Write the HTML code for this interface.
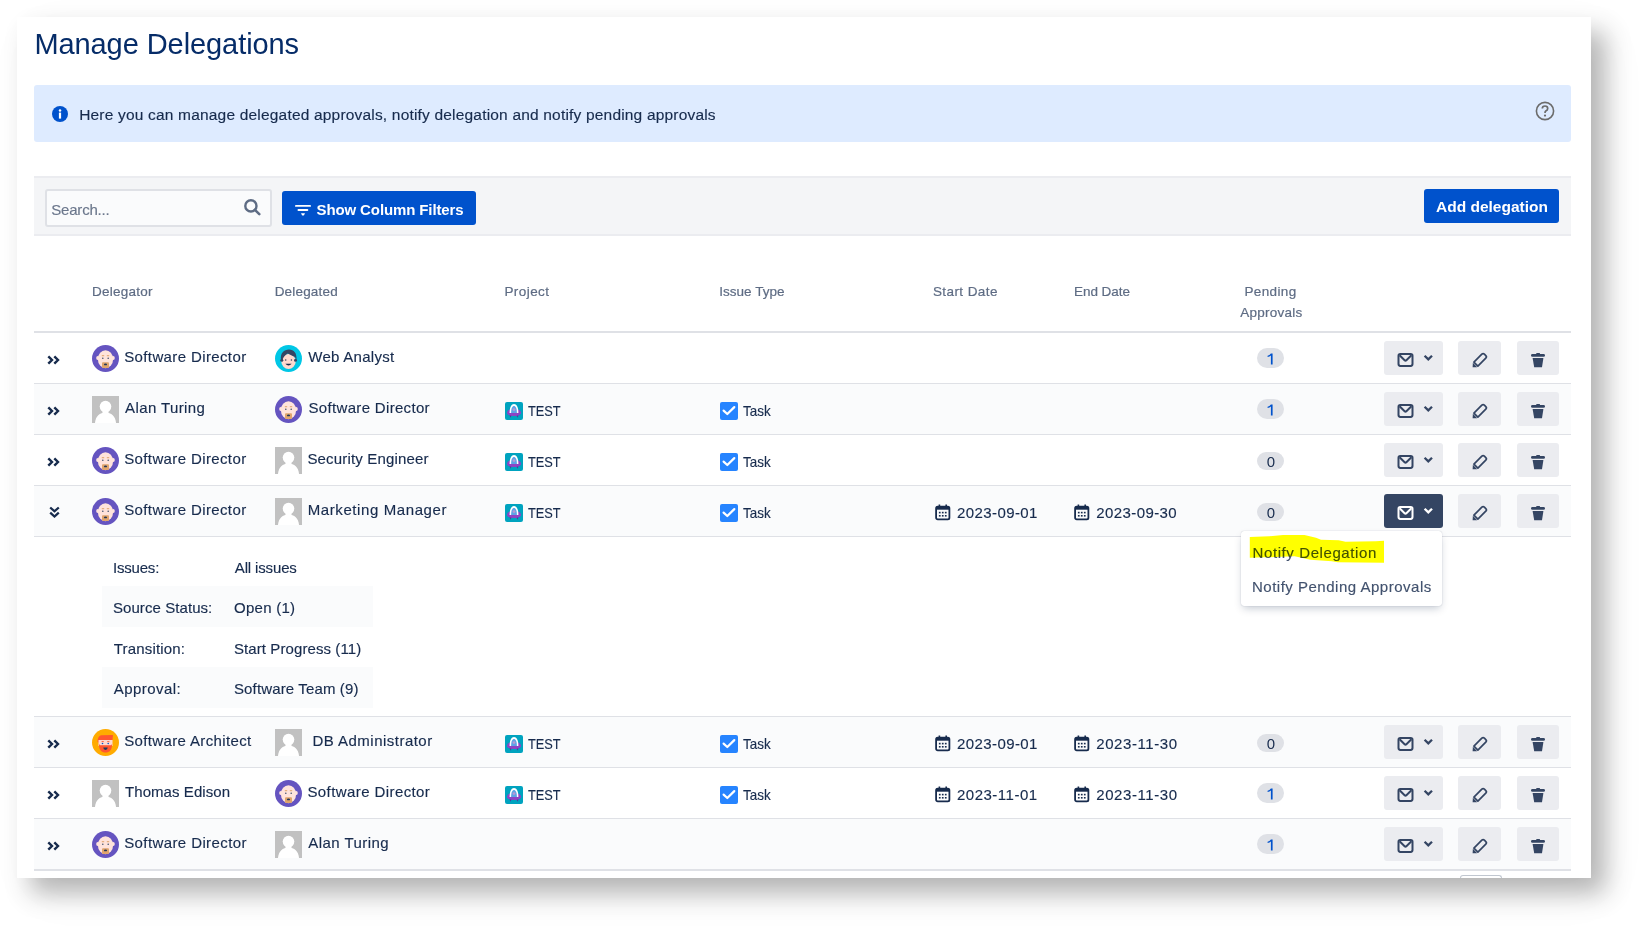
<!DOCTYPE html><html><head><meta charset="utf-8"><style>
html,body{margin:0;padding:0;background:#fff;}
body{width:1639px;height:926px;position:relative;overflow:hidden;font-family:"Liberation Sans", sans-serif;}
.t{position:absolute;white-space:nowrap;font-family:"Liberation Sans", sans-serif;}
</style></head><body>
<div style="position:absolute;left:17px;top:17px;width:1574px;height:861px;background:#fff;box-shadow:14px 15px 24px rgba(0,0,0,0.28),14px 15px 50px rgba(0,0,0,0.04);"></div>
<div class="t" id="t0" style="left:34.38px;top:30.35px;font-size:29px;line-height:29px;color:#062c68;font-weight:400;letter-spacing:-0.075px;">Manage Delegations</div>
<div style="position:absolute;left:34px;top:85px;width:1537px;height:57px;background:#deebff;border-radius:3px"></div>
<svg style="position:absolute;left:52px;top:106px;" width="16" height="16" viewBox="0 0 16 16"><circle cx="8" cy="8" r="8" fill="#0052cc"/><rect x="6.9" y="6.6" width="2.2" height="6" fill="#fff"/><circle cx="8" cy="4.4" r="1.25" fill="#fff"/></svg>
<div class="t" id="t1" style="left:79.20px;top:106.83px;font-size:15.5px;line-height:15.5px;color:#172b4d;font-weight:400;letter-spacing:0.186px;-webkit-text-stroke:0.15px #172b4d;">Here you can manage delegated approvals, notify delegation and notify pending approvals</div>
<svg style="position:absolute;left:1535px;top:101px;" width="20" height="20" viewBox="0 0 20 20"><circle cx="10" cy="10" r="8.6" fill="none" stroke="#6b6b6b" stroke-width="1.6"/><path d="M7.3 7.6 Q7.3 5 10 5 Q12.7 5 12.7 7.4 Q12.7 9 10.8 10 Q10 10.5 10 12" fill="none" stroke="#6b6b6b" stroke-width="1.7"/><circle cx="10" cy="14.6" r="1.1" fill="#6b6b6b"/></svg>
<div style="position:absolute;left:34px;top:176px;width:1537px;height:60px;background:#f4f5f7;border-top:2px solid #ebecf0;border-bottom:2px solid #ebecf0;box-sizing:border-box"></div>
<div style="position:absolute;left:45px;top:189px;width:227px;height:38px;background:#fafbfc;border:2px solid #dfe1e6;border-radius:3px;box-sizing:border-box"></div>
<div class="t" id="t2" style="left:51.18px;top:202.25px;font-size:15px;line-height:15px;color:#6b778c;font-weight:400;letter-spacing:-0.180px;-webkit-text-stroke:0.15px #6b778c;">Search...</div>
<svg style="position:absolute;left:242px;top:197px;" width="20" height="20" viewBox="0 0 20 20"><circle cx="8.9" cy="8.9" r="5.6" fill="none" stroke="#5e6c84" stroke-width="2.4"/><path d="M12.9 12.9 L17.3 17.1" stroke="#5e6c84" stroke-width="2.6" stroke-linecap="round"/></svg>
<div style="position:absolute;left:282px;top:191px;width:194px;height:34px;background:#0052cc;border-radius:3px"></div>
<svg style="position:absolute;left:294px;top:204px;" width="18" height="14" viewBox="0 0 18 14"><rect x="1" y="1" width="16" height="1.8" rx="0.9" fill="#fff"/><rect x="3.5" y="5" width="10.8" height="1.9" rx="0.9" fill="#fff"/><path d="M7 9.2 L11 9.2 L10 11.2 Q9 11.9 8 11.2 Z" fill="#fff"/></svg>
<div class="t" id="t3" style="left:316.54px;top:202.45px;font-size:15px;line-height:15px;color:#fff;font-weight:700;letter-spacing:-0.116px;">Show Column Filters</div>
<div style="position:absolute;left:1424px;top:189px;width:135px;height:34px;background:#0052cc;border-radius:3px"></div>
<div class="t" id="t4" style="left:1436.00px;top:199.42px;font-size:15.5px;line-height:15.5px;color:#fff;font-weight:700;letter-spacing:0.000px;">Add delegation</div>
<div class="t" id="t5" style="left:91.96px;top:284.52px;font-size:13.5px;line-height:13.5px;color:#5e6c84;font-weight:400;letter-spacing:0.260px;-webkit-text-stroke:0.2px #5e6c84;">Delegator</div>
<div class="t" id="t6" style="left:274.70px;top:284.52px;font-size:13.5px;line-height:13.5px;color:#5e6c84;font-weight:400;letter-spacing:0.180px;-webkit-text-stroke:0.2px #5e6c84;">Delegated</div>
<div class="t" id="t7" style="left:504.44px;top:284.52px;font-size:13.5px;line-height:13.5px;color:#5e6c84;font-weight:400;letter-spacing:0.427px;-webkit-text-stroke:0.2px #5e6c84;">Project</div>
<div class="t" id="t8" style="left:719.18px;top:284.52px;font-size:13.5px;line-height:13.5px;color:#5e6c84;font-weight:400;letter-spacing:0.036px;-webkit-text-stroke:0.2px #5e6c84;">Issue Type</div>
<div class="t" id="t9" style="left:932.94px;top:284.52px;font-size:13.5px;line-height:13.5px;color:#5e6c84;font-weight:400;letter-spacing:0.409px;-webkit-text-stroke:0.2px #5e6c84;">Start Date</div>
<div class="t" id="t10" style="left:1073.94px;top:284.52px;font-size:13.5px;line-height:13.5px;color:#5e6c84;font-weight:400;letter-spacing:-0.023px;-webkit-text-stroke:0.2px #5e6c84;">End Date</div>
<div class="t" id="t11" style="left:1244.42px;top:284.52px;font-size:13.5px;line-height:13.5px;color:#5e6c84;font-weight:400;letter-spacing:0.373px;-webkit-text-stroke:0.2px #5e6c84;">Pending</div>
<div class="t" id="t12" style="left:1240.24px;top:306.12px;font-size:13.5px;line-height:13.5px;color:#5e6c84;font-weight:400;letter-spacing:0.260px;-webkit-text-stroke:0.2px #5e6c84;">Approvals</div>
<div style="position:absolute;left:34px;top:331px;width:1537px;height:2px;background:#dfe1e6"></div>
<div style="position:absolute;left:34px;top:333px;width:1537px;height:50px;background:#fff"></div>
<div style="position:absolute;left:34px;top:383px;width:1537px;height:1px;background:#dfe1e6"></div>
<svg style="position:absolute;left:47.4px;top:354.6px;" width="13" height="10" viewBox="0 0 13 10"><path d="M1.3 1.3 L5 5 L1.3 8.7 M7.3 1.3 L11 5 L7.3 8.7" fill="none" stroke="#172b4d" stroke-width="2.4" stroke-linecap="butt" stroke-linejoin="miter"/></svg>
<svg style="position:absolute;left:92px;top:345px;" width="27" height="27" viewBox="0 0 27 27"><circle cx="13.5" cy="13.5" r="13.5" fill="#6554c0"/>
<ellipse cx="13.5" cy="14.2" rx="7.6" ry="9" fill="#ffe3db"/>
<ellipse cx="5.8" cy="13" rx="1.6" ry="2" fill="#ffe3db"/><ellipse cx="21.2" cy="13" rx="1.6" ry="2" fill="#ffe3db"/>
<rect x="10" y="17.3" width="7" height="5.6" rx="1" fill="#e0a46c"/>
<ellipse cx="13.5" cy="19.4" rx="1.6" ry="0.9" fill="#253858"/>
<rect x="9.8" y="10.2" width="2.4" height="1" fill="#e0a46c"/><rect x="14.8" y="10.2" width="2.4" height="1" fill="#e0a46c"/>
<circle cx="10.8" cy="13.2" r="0.8" fill="#42526e"/><circle cx="16.2" cy="13.2" r="0.8" fill="#42526e"/></svg>
<div class="t" id="t13" style="left:124.20px;top:349.45px;font-size:15px;line-height:15px;color:#172b4d;font-weight:400;letter-spacing:0.380px;-webkit-text-stroke:0.15px #172b4d;">Software Director</div>
<svg style="position:absolute;left:275px;top:345px;" width="27" height="27" viewBox="0 0 27 27"><circle cx="13.5" cy="13.5" r="13.5" fill="#00c7e6"/>
<ellipse cx="13.5" cy="16.5" rx="7.2" ry="7.4" fill="#ffd9cf"/>
<path d="M6 15 C5 8 9 4.5 14 4.5 C19 4.5 22 8 21.5 15 L20 12 C17 11 14 9 12.5 8.5 C10.5 10 8 12 7.5 15 Z" fill="#344563"/>
<circle cx="6.8" cy="15.2" r="1.5" fill="#344563"/><circle cx="20.5" cy="15.2" r="1.5" fill="#344563"/>
<circle cx="10.7" cy="15" r="0.8" fill="#344563"/><circle cx="16.4" cy="15" r="0.8" fill="#344563"/>
<path d="M10.3 18.8 Q13.5 22.2 16.7 18.8 Z" fill="#172b4d"/></svg>
<div class="t" id="t14" style="left:308.24px;top:349.45px;font-size:15px;line-height:15px;color:#172b4d;font-weight:400;letter-spacing:0.288px;-webkit-text-stroke:0.15px #172b4d;">Web Analyst</div>
<div style="position:absolute;left:1257.0px;top:348px;width:27px;height:20px;border-radius:10px;background:#dfe1e6;"></div>
<svg style="position:absolute;left:1264.5px;top:352.8px;" width="10" height="13" viewBox="0 0 10 13"><path d="M5.9 0.4 L7.6 0.4 L7.6 11.4 L5.9 11.4 L5.9 2.5 Q4.6 3.5 2.6 4.1 L2.6 2.8 Q4.6 2 5.9 0.4 Z" fill="#0052cc"/></svg>
<div style="position:absolute;left:1384px;top:341px;width:59px;height:34px;background:#ebecf0;border-radius:3px"></div>
<svg style="position:absolute;left:1397px;top:353px;" width="17" height="15" viewBox="0 0 17 15"><rect x="1.5" y="1" width="14" height="11.9" rx="1.8" fill="none" stroke="#344563" stroke-width="2"/>
<path d="M2.6 2.2 L7.6 7.2 Q8.5 8 9.4 7.2 L14.4 2.2" fill="none" stroke="#344563" stroke-width="2"/></svg>
<svg style="position:absolute;left:1423px;top:354px;" width="11" height="8" viewBox="0 0 11 8"><path d="M1.6 1.7 L5.3 5.3 L9 1.7" fill="none" stroke="#344563" stroke-width="2.3"/></svg>
<div style="position:absolute;left:1458px;top:341px;width:43px;height:34px;background:#ebecf0;border-radius:3px"></div>
<svg style="position:absolute;left:1470.8px;top:351.8px;overflow:visible" width="17" height="17" viewBox="0 0 17 17"><g transform="rotate(-45 8.5 8.5)">
<path d="M3.4 5.7 L14.6 5.7 Q16.4 5.7 16.4 7.5 L16.4 9.5 Q16.4 11.3 14.6 11.3 L3.4 11.3 Z" fill="none" stroke="#344563" stroke-width="1.7" stroke-linejoin="round"/>
<path d="M-1.2 8.5 L2.2 5.4 L2.2 11.6 Z" fill="#344563"/>
</g></svg>
<div style="position:absolute;left:1517px;top:341px;width:42px;height:34px;background:#ebecf0;border-radius:3px"></div>
<svg style="position:absolute;left:1530px;top:352px;" width="16" height="17" viewBox="0 0 16 17"><rect x="1" y="2" width="14" height="2.8" rx="1.4" fill="#344563"/>
<rect x="6.2" y="0.9" width="3.8" height="2" rx="0.6" fill="#344563"/>
<path d="M2.6 6.1 L13.4 6.1 L12 15.2 L4.2 15.2 Z" fill="#344563"/></svg>
<div style="position:absolute;left:34px;top:384px;width:1537px;height:50px;background:#fafbfc"></div>
<div style="position:absolute;left:34px;top:434px;width:1537px;height:1px;background:#dfe1e6"></div>
<svg style="position:absolute;left:47.4px;top:405.6px;" width="13" height="10" viewBox="0 0 13 10"><path d="M1.3 1.3 L5 5 L1.3 8.7 M7.3 1.3 L11 5 L7.3 8.7" fill="none" stroke="#172b4d" stroke-width="2.4" stroke-linecap="butt" stroke-linejoin="miter"/></svg>
<svg style="position:absolute;left:92px;top:396px;" width="27" height="27" viewBox="0 0 27 27"><rect width="27" height="27" fill="#c1c1c1"/>
<circle cx="13.5" cy="10.6" r="5.8" fill="#fff"/>
<rect x="10.5" y="14" width="6" height="4" fill="#fff"/>
<path d="M3 27 C3.4 20.2 7.8 16.4 13.5 16.4 C19.2 16.4 23.6 20.2 24 27 Z" fill="#fff"/></svg>
<div class="t" id="t15" style="left:125.00px;top:400.45px;font-size:15px;line-height:15px;color:#172b4d;font-weight:400;letter-spacing:0.400px;-webkit-text-stroke:0.15px #172b4d;">Alan Turing</div>
<svg style="position:absolute;left:275px;top:396px;" width="27" height="27" viewBox="0 0 27 27"><circle cx="13.5" cy="13.5" r="13.5" fill="#6554c0"/>
<ellipse cx="13.5" cy="14.2" rx="7.6" ry="9" fill="#ffe3db"/>
<ellipse cx="5.8" cy="13" rx="1.6" ry="2" fill="#ffe3db"/><ellipse cx="21.2" cy="13" rx="1.6" ry="2" fill="#ffe3db"/>
<rect x="10" y="17.3" width="7" height="5.6" rx="1" fill="#e0a46c"/>
<ellipse cx="13.5" cy="19.4" rx="1.6" ry="0.9" fill="#253858"/>
<rect x="9.8" y="10.2" width="2.4" height="1" fill="#e0a46c"/><rect x="14.8" y="10.2" width="2.4" height="1" fill="#e0a46c"/>
<circle cx="10.8" cy="13.2" r="0.8" fill="#42526e"/><circle cx="16.2" cy="13.2" r="0.8" fill="#42526e"/></svg>
<div class="t" id="t16" style="left:308.48px;top:400.45px;font-size:15px;line-height:15px;color:#172b4d;font-weight:400;letter-spacing:0.330px;-webkit-text-stroke:0.15px #172b4d;">Software Director</div>
<svg style="position:absolute;left:505px;top:402px;" width="18" height="18" viewBox="0 0 18 18"><rect width="18" height="18" rx="2" fill="#00a3bf"/>
<ellipse cx="9" cy="10.4" rx="7" ry="3.6" fill="#8e44c4"/>
<path d="M4.6 12.5 L5.2 15.8 L6.6 13.2 Z M13.4 12.5 L12.8 15.8 L11.4 13.2 Z" fill="#5b2a9a"/>
<path d="M4.6 11 C4.6 5 6.5 2.1 9 2.1 C11.5 2.1 13.4 5 13.4 11 Z" fill="#fff"/>
<path d="M6.1 11 C6.1 6.2 7.4 4.1 9 4.1 C10.6 4.1 11.9 6.2 11.9 11 Z" fill="#5ea3e6"/>
<circle cx="9" cy="7.6" r="1.4" fill="#b79ad8"/>
<path d="M2 10.2 Q2 14 9 14 Q16 14 16 10.2 Q13 12 9 12 Q5 12 2 10.2 Z" fill="#8e44c4"/></svg>
<div class="t" id="test1" style="left:527.80px;top:403.25px;font-size:15px;line-height:15px;color:#172b4d;font-weight:400;transform:scaleX(0.8513);transform-origin:0 0;-webkit-text-stroke:0.15px #172b4d;">TEST</div>
<svg style="position:absolute;left:720px;top:402px;" width="18" height="18" viewBox="0 0 18 18"><rect width="18" height="18" rx="2" fill="#2684ff"/>
<path d="M3.6 8.6 L7.3 12 L14.3 5.1" fill="none" stroke="#fff" stroke-width="2.2" stroke-linecap="round" stroke-linejoin="round"/></svg>
<div class="t" id="task1" style="left:743.30px;top:403.25px;font-size:15px;line-height:15px;color:#172b4d;font-weight:400;transform:scaleX(0.8958);transform-origin:0 0;-webkit-text-stroke:0.15px #172b4d;">Task</div>
<div style="position:absolute;left:1257.0px;top:399px;width:27px;height:20px;border-radius:10px;background:#dfe1e6;"></div>
<svg style="position:absolute;left:1264.5px;top:403.8px;" width="10" height="13" viewBox="0 0 10 13"><path d="M5.9 0.4 L7.6 0.4 L7.6 11.4 L5.9 11.4 L5.9 2.5 Q4.6 3.5 2.6 4.1 L2.6 2.8 Q4.6 2 5.9 0.4 Z" fill="#0052cc"/></svg>
<div style="position:absolute;left:1384px;top:392px;width:59px;height:34px;background:#ebecf0;border-radius:3px"></div>
<svg style="position:absolute;left:1397px;top:404px;" width="17" height="15" viewBox="0 0 17 15"><rect x="1.5" y="1" width="14" height="11.9" rx="1.8" fill="none" stroke="#344563" stroke-width="2"/>
<path d="M2.6 2.2 L7.6 7.2 Q8.5 8 9.4 7.2 L14.4 2.2" fill="none" stroke="#344563" stroke-width="2"/></svg>
<svg style="position:absolute;left:1423px;top:405px;" width="11" height="8" viewBox="0 0 11 8"><path d="M1.6 1.7 L5.3 5.3 L9 1.7" fill="none" stroke="#344563" stroke-width="2.3"/></svg>
<div style="position:absolute;left:1458px;top:392px;width:43px;height:34px;background:#ebecf0;border-radius:3px"></div>
<svg style="position:absolute;left:1470.8px;top:402.8px;overflow:visible" width="17" height="17" viewBox="0 0 17 17"><g transform="rotate(-45 8.5 8.5)">
<path d="M3.4 5.7 L14.6 5.7 Q16.4 5.7 16.4 7.5 L16.4 9.5 Q16.4 11.3 14.6 11.3 L3.4 11.3 Z" fill="none" stroke="#344563" stroke-width="1.7" stroke-linejoin="round"/>
<path d="M-1.2 8.5 L2.2 5.4 L2.2 11.6 Z" fill="#344563"/>
</g></svg>
<div style="position:absolute;left:1517px;top:392px;width:42px;height:34px;background:#ebecf0;border-radius:3px"></div>
<svg style="position:absolute;left:1530px;top:403px;" width="16" height="17" viewBox="0 0 16 17"><rect x="1" y="2" width="14" height="2.8" rx="1.4" fill="#344563"/>
<rect x="6.2" y="0.9" width="3.8" height="2" rx="0.6" fill="#344563"/>
<path d="M2.6 6.1 L13.4 6.1 L12 15.2 L4.2 15.2 Z" fill="#344563"/></svg>
<div style="position:absolute;left:34px;top:435px;width:1537px;height:50px;background:#fff"></div>
<div style="position:absolute;left:34px;top:485px;width:1537px;height:1px;background:#dfe1e6"></div>
<svg style="position:absolute;left:47.4px;top:456.6px;" width="13" height="10" viewBox="0 0 13 10"><path d="M1.3 1.3 L5 5 L1.3 8.7 M7.3 1.3 L11 5 L7.3 8.7" fill="none" stroke="#172b4d" stroke-width="2.4" stroke-linecap="butt" stroke-linejoin="miter"/></svg>
<svg style="position:absolute;left:92px;top:447px;" width="27" height="27" viewBox="0 0 27 27"><circle cx="13.5" cy="13.5" r="13.5" fill="#6554c0"/>
<ellipse cx="13.5" cy="14.2" rx="7.6" ry="9" fill="#ffe3db"/>
<ellipse cx="5.8" cy="13" rx="1.6" ry="2" fill="#ffe3db"/><ellipse cx="21.2" cy="13" rx="1.6" ry="2" fill="#ffe3db"/>
<rect x="10" y="17.3" width="7" height="5.6" rx="1" fill="#e0a46c"/>
<ellipse cx="13.5" cy="19.4" rx="1.6" ry="0.9" fill="#253858"/>
<rect x="9.8" y="10.2" width="2.4" height="1" fill="#e0a46c"/><rect x="14.8" y="10.2" width="2.4" height="1" fill="#e0a46c"/>
<circle cx="10.8" cy="13.2" r="0.8" fill="#42526e"/><circle cx="16.2" cy="13.2" r="0.8" fill="#42526e"/></svg>
<div class="t" id="t19" style="left:124.20px;top:451.45px;font-size:15px;line-height:15px;color:#172b4d;font-weight:400;letter-spacing:0.380px;-webkit-text-stroke:0.15px #172b4d;">Software Director</div>
<svg style="position:absolute;left:275px;top:447px;" width="27" height="27" viewBox="0 0 27 27"><rect width="27" height="27" fill="#c1c1c1"/>
<circle cx="13.5" cy="10.6" r="5.8" fill="#fff"/>
<rect x="10.5" y="14" width="6" height="4" fill="#fff"/>
<path d="M3 27 C3.4 20.2 7.8 16.4 13.5 16.4 C19.2 16.4 23.6 20.2 24 27 Z" fill="#fff"/></svg>
<div class="t" id="t20" style="left:307.44px;top:451.45px;font-size:15px;line-height:15px;color:#172b4d;font-weight:400;letter-spacing:0.170px;-webkit-text-stroke:0.15px #172b4d;">Security Engineer</div>
<svg style="position:absolute;left:505px;top:453px;" width="18" height="18" viewBox="0 0 18 18"><rect width="18" height="18" rx="2" fill="#00a3bf"/>
<ellipse cx="9" cy="10.4" rx="7" ry="3.6" fill="#8e44c4"/>
<path d="M4.6 12.5 L5.2 15.8 L6.6 13.2 Z M13.4 12.5 L12.8 15.8 L11.4 13.2 Z" fill="#5b2a9a"/>
<path d="M4.6 11 C4.6 5 6.5 2.1 9 2.1 C11.5 2.1 13.4 5 13.4 11 Z" fill="#fff"/>
<path d="M6.1 11 C6.1 6.2 7.4 4.1 9 4.1 C10.6 4.1 11.9 6.2 11.9 11 Z" fill="#5ea3e6"/>
<circle cx="9" cy="7.6" r="1.4" fill="#b79ad8"/>
<path d="M2 10.2 Q2 14 9 14 Q16 14 16 10.2 Q13 12 9 12 Q5 12 2 10.2 Z" fill="#8e44c4"/></svg>
<div class="t" id="test2" style="left:527.80px;top:454.25px;font-size:15px;line-height:15px;color:#172b4d;font-weight:400;transform:scaleX(0.8513);transform-origin:0 0;-webkit-text-stroke:0.15px #172b4d;">TEST</div>
<svg style="position:absolute;left:720px;top:453px;" width="18" height="18" viewBox="0 0 18 18"><rect width="18" height="18" rx="2" fill="#2684ff"/>
<path d="M3.6 8.6 L7.3 12 L14.3 5.1" fill="none" stroke="#fff" stroke-width="2.2" stroke-linecap="round" stroke-linejoin="round"/></svg>
<div class="t" id="task2" style="left:743.30px;top:454.25px;font-size:15px;line-height:15px;color:#172b4d;font-weight:400;transform:scaleX(0.8958);transform-origin:0 0;-webkit-text-stroke:0.15px #172b4d;">Task</div>
<div style="position:absolute;left:1257.0px;top:452px;width:27px;height:18px;border-radius:9px;background:#dfe1e6;"></div>
<div class="t" style="left:1257.5px;width:27px;text-align:center;top:454.25px;font-size:15px;line-height:15px;color:#172b4d">0</div>
<div style="position:absolute;left:1384px;top:443px;width:59px;height:34px;background:#ebecf0;border-radius:3px"></div>
<svg style="position:absolute;left:1397px;top:455px;" width="17" height="15" viewBox="0 0 17 15"><rect x="1.5" y="1" width="14" height="11.9" rx="1.8" fill="none" stroke="#344563" stroke-width="2"/>
<path d="M2.6 2.2 L7.6 7.2 Q8.5 8 9.4 7.2 L14.4 2.2" fill="none" stroke="#344563" stroke-width="2"/></svg>
<svg style="position:absolute;left:1423px;top:456px;" width="11" height="8" viewBox="0 0 11 8"><path d="M1.6 1.7 L5.3 5.3 L9 1.7" fill="none" stroke="#344563" stroke-width="2.3"/></svg>
<div style="position:absolute;left:1458px;top:443px;width:43px;height:34px;background:#ebecf0;border-radius:3px"></div>
<svg style="position:absolute;left:1470.8px;top:453.8px;overflow:visible" width="17" height="17" viewBox="0 0 17 17"><g transform="rotate(-45 8.5 8.5)">
<path d="M3.4 5.7 L14.6 5.7 Q16.4 5.7 16.4 7.5 L16.4 9.5 Q16.4 11.3 14.6 11.3 L3.4 11.3 Z" fill="none" stroke="#344563" stroke-width="1.7" stroke-linejoin="round"/>
<path d="M-1.2 8.5 L2.2 5.4 L2.2 11.6 Z" fill="#344563"/>
</g></svg>
<div style="position:absolute;left:1517px;top:443px;width:42px;height:34px;background:#ebecf0;border-radius:3px"></div>
<svg style="position:absolute;left:1530px;top:454px;" width="16" height="17" viewBox="0 0 16 17"><rect x="1" y="2" width="14" height="2.8" rx="1.4" fill="#344563"/>
<rect x="6.2" y="0.9" width="3.8" height="2" rx="0.6" fill="#344563"/>
<path d="M2.6 6.1 L13.4 6.1 L12 15.2 L4.2 15.2 Z" fill="#344563"/></svg>
<div style="position:absolute;left:34px;top:486px;width:1537px;height:50px;background:#fafbfc"></div>
<div style="position:absolute;left:34px;top:536px;width:1537px;height:1px;background:#dfe1e6"></div>
<svg style="position:absolute;left:49px;top:506.3px;" width="11" height="12" viewBox="0 0 11 12"><path d="M1.2 1.5 L5.5 5.3 L9.8 1.5 M1.2 6.7 L5.5 10.5 L9.8 6.7" fill="none" stroke="#172b4d" stroke-width="2.3"/></svg>
<svg style="position:absolute;left:92px;top:498px;" width="27" height="27" viewBox="0 0 27 27"><circle cx="13.5" cy="13.5" r="13.5" fill="#6554c0"/>
<ellipse cx="13.5" cy="14.2" rx="7.6" ry="9" fill="#ffe3db"/>
<ellipse cx="5.8" cy="13" rx="1.6" ry="2" fill="#ffe3db"/><ellipse cx="21.2" cy="13" rx="1.6" ry="2" fill="#ffe3db"/>
<rect x="10" y="17.3" width="7" height="5.6" rx="1" fill="#e0a46c"/>
<ellipse cx="13.5" cy="19.4" rx="1.6" ry="0.9" fill="#253858"/>
<rect x="9.8" y="10.2" width="2.4" height="1" fill="#e0a46c"/><rect x="14.8" y="10.2" width="2.4" height="1" fill="#e0a46c"/>
<circle cx="10.8" cy="13.2" r="0.8" fill="#42526e"/><circle cx="16.2" cy="13.2" r="0.8" fill="#42526e"/></svg>
<div class="t" id="t23" style="left:124.20px;top:502.45px;font-size:15px;line-height:15px;color:#172b4d;font-weight:400;letter-spacing:0.380px;-webkit-text-stroke:0.15px #172b4d;">Software Director</div>
<svg style="position:absolute;left:275px;top:498px;" width="27" height="27" viewBox="0 0 27 27"><rect width="27" height="27" fill="#c1c1c1"/>
<circle cx="13.5" cy="10.6" r="5.8" fill="#fff"/>
<rect x="10.5" y="14" width="6" height="4" fill="#fff"/>
<path d="M3 27 C3.4 20.2 7.8 16.4 13.5 16.4 C19.2 16.4 23.6 20.2 24 27 Z" fill="#fff"/></svg>
<div class="t" id="t24" style="left:307.68px;top:502.45px;font-size:15px;line-height:15px;color:#172b4d;font-weight:400;letter-spacing:0.600px;-webkit-text-stroke:0.15px #172b4d;">Marketing Manager</div>
<svg style="position:absolute;left:505px;top:504px;" width="18" height="18" viewBox="0 0 18 18"><rect width="18" height="18" rx="2" fill="#00a3bf"/>
<ellipse cx="9" cy="10.4" rx="7" ry="3.6" fill="#8e44c4"/>
<path d="M4.6 12.5 L5.2 15.8 L6.6 13.2 Z M13.4 12.5 L12.8 15.8 L11.4 13.2 Z" fill="#5b2a9a"/>
<path d="M4.6 11 C4.6 5 6.5 2.1 9 2.1 C11.5 2.1 13.4 5 13.4 11 Z" fill="#fff"/>
<path d="M6.1 11 C6.1 6.2 7.4 4.1 9 4.1 C10.6 4.1 11.9 6.2 11.9 11 Z" fill="#5ea3e6"/>
<circle cx="9" cy="7.6" r="1.4" fill="#b79ad8"/>
<path d="M2 10.2 Q2 14 9 14 Q16 14 16 10.2 Q13 12 9 12 Q5 12 2 10.2 Z" fill="#8e44c4"/></svg>
<div class="t" id="test3" style="left:527.80px;top:505.25px;font-size:15px;line-height:15px;color:#172b4d;font-weight:400;transform:scaleX(0.8513);transform-origin:0 0;-webkit-text-stroke:0.15px #172b4d;">TEST</div>
<svg style="position:absolute;left:720px;top:504px;" width="18" height="18" viewBox="0 0 18 18"><rect width="18" height="18" rx="2" fill="#2684ff"/>
<path d="M3.6 8.6 L7.3 12 L14.3 5.1" fill="none" stroke="#fff" stroke-width="2.2" stroke-linecap="round" stroke-linejoin="round"/></svg>
<div class="t" id="task3" style="left:743.30px;top:505.25px;font-size:15px;line-height:15px;color:#172b4d;font-weight:400;transform:scaleX(0.8958);transform-origin:0 0;-webkit-text-stroke:0.15px #172b4d;">Task</div>
<svg style="position:absolute;left:935.3px;top:504.2px;" width="16" height="17" viewBox="0 0 16 17"><rect x="1.1" y="2.7" width="13.3" height="12.6" rx="1.6" fill="none" stroke="#172b4d" stroke-width="1.8"/>
<rect x="1.1" y="2.7" width="13.3" height="3" fill="#172b4d"/>
<rect x="3.6" y="0.5" width="1.6" height="2.8" fill="#172b4d"/><rect x="10.4" y="0.5" width="1.6" height="2.8" fill="#172b4d"/>
<rect x="3.9" y="7.8" width="1.7" height="1.6" fill="#172b4d"/><rect x="6.9" y="7.8" width="1.7" height="1.6" fill="#172b4d"/><rect x="9.9" y="7.8" width="1.7" height="1.6" fill="#172b4d"/>
<rect x="3.9" y="11" width="1.7" height="1.6" fill="#172b4d"/><rect x="6.9" y="11" width="1.7" height="1.6" fill="#172b4d"/><rect x="9.9" y="11" width="1.7" height="1.6" fill="#172b4d"/></svg>
<div class="t" id="t27" style="left:956.98px;top:505.25px;font-size:15px;line-height:15px;color:#172b4d;font-weight:400;letter-spacing:0.409px;-webkit-text-stroke:0.15px #172b4d;">2023-09-01</div>
<svg style="position:absolute;left:1074.3px;top:504.2px;" width="16" height="17" viewBox="0 0 16 17"><rect x="1.1" y="2.7" width="13.3" height="12.6" rx="1.6" fill="none" stroke="#172b4d" stroke-width="1.8"/>
<rect x="1.1" y="2.7" width="13.3" height="3" fill="#172b4d"/>
<rect x="3.6" y="0.5" width="1.6" height="2.8" fill="#172b4d"/><rect x="10.4" y="0.5" width="1.6" height="2.8" fill="#172b4d"/>
<rect x="3.9" y="7.8" width="1.7" height="1.6" fill="#172b4d"/><rect x="6.9" y="7.8" width="1.7" height="1.6" fill="#172b4d"/><rect x="9.9" y="7.8" width="1.7" height="1.6" fill="#172b4d"/>
<rect x="3.9" y="11" width="1.7" height="1.6" fill="#172b4d"/><rect x="6.9" y="11" width="1.7" height="1.6" fill="#172b4d"/><rect x="9.9" y="11" width="1.7" height="1.6" fill="#172b4d"/></svg>
<div class="t" id="t28" style="left:1096.24px;top:505.25px;font-size:15px;line-height:15px;color:#172b4d;font-weight:400;letter-spacing:0.409px;-webkit-text-stroke:0.15px #172b4d;">2023-09-30</div>
<div style="position:absolute;left:1257.0px;top:503px;width:27px;height:18px;border-radius:9px;background:#dfe1e6;"></div>
<div class="t" style="left:1257.5px;width:27px;text-align:center;top:505.25px;font-size:15px;line-height:15px;color:#172b4d">0</div>
<div style="position:absolute;left:1384px;top:494px;width:59px;height:34px;background:#344563;border-radius:3px"></div>
<svg style="position:absolute;left:1397px;top:506px;" width="17" height="15" viewBox="0 0 17 15"><rect x="1.5" y="1" width="14" height="11.9" rx="1.8" fill="none" stroke="#fff" stroke-width="2"/>
<path d="M2.6 2.2 L7.6 7.2 Q8.5 8 9.4 7.2 L14.4 2.2" fill="none" stroke="#fff" stroke-width="2"/></svg>
<svg style="position:absolute;left:1423px;top:507px;" width="11" height="8" viewBox="0 0 11 8"><path d="M1.6 1.7 L5.3 5.3 L9 1.7" fill="none" stroke="#fff" stroke-width="2.3"/></svg>
<div style="position:absolute;left:1458px;top:494px;width:43px;height:34px;background:#ebecf0;border-radius:3px"></div>
<svg style="position:absolute;left:1470.8px;top:504.8px;overflow:visible" width="17" height="17" viewBox="0 0 17 17"><g transform="rotate(-45 8.5 8.5)">
<path d="M3.4 5.7 L14.6 5.7 Q16.4 5.7 16.4 7.5 L16.4 9.5 Q16.4 11.3 14.6 11.3 L3.4 11.3 Z" fill="none" stroke="#344563" stroke-width="1.7" stroke-linejoin="round"/>
<path d="M-1.2 8.5 L2.2 5.4 L2.2 11.6 Z" fill="#344563"/>
</g></svg>
<div style="position:absolute;left:1517px;top:494px;width:42px;height:34px;background:#ebecf0;border-radius:3px"></div>
<svg style="position:absolute;left:1530px;top:505px;" width="16" height="17" viewBox="0 0 16 17"><rect x="1" y="2" width="14" height="2.8" rx="1.4" fill="#344563"/>
<rect x="6.2" y="0.9" width="3.8" height="2" rx="0.6" fill="#344563"/>
<path d="M2.6 6.1 L13.4 6.1 L12 15.2 L4.2 15.2 Z" fill="#344563"/></svg>
<div style="position:absolute;left:34px;top:717px;width:1537px;height:50px;background:#fafbfc"></div>
<div style="position:absolute;left:34px;top:767px;width:1537px;height:1px;background:#dfe1e6"></div>
<svg style="position:absolute;left:47.4px;top:738.6px;" width="13" height="10" viewBox="0 0 13 10"><path d="M1.3 1.3 L5 5 L1.3 8.7 M7.3 1.3 L11 5 L7.3 8.7" fill="none" stroke="#172b4d" stroke-width="2.4" stroke-linecap="butt" stroke-linejoin="miter"/></svg>
<svg style="position:absolute;left:92px;top:729px;" width="27" height="27" viewBox="0 0 27 27"><circle cx="13.5" cy="13.5" r="13.5" fill="#ffab00"/>
<path d="M5.5 13 C5.5 9 7 7 9 6.3 L21 6 L20.5 11 L6.5 13.5 Z" fill="#ff5630"/>
<rect x="6.5" y="11" width="14" height="6" fill="#ffd9cf"/>
<path d="M7 15.5 L20 15.5 C20 21 17.5 23.5 13.5 23.5 C9.5 23.5 7 21 7 15.5 Z" fill="#ff5630"/>
<rect x="7.8" y="11" width="11.6" height="5.2" fill="#ffd9cf"/>
<circle cx="10.5" cy="14.5" r="0.8" fill="#0052cc"/><circle cx="16.2" cy="14.5" r="0.8" fill="#0052cc"/>
<rect x="9.6" y="12.2" width="2.2" height="0.9" fill="#ff5630"/><rect x="15.2" y="12.2" width="2.2" height="0.9" fill="#ff5630"/>
<path d="M11.3 18.6 L15.7 18.6 Q15.7 21 13.5 21 Q11.3 21 11.3 18.6Z" fill="#253858"/></svg>
<div class="t" id="t29" style="left:124.20px;top:733.45px;font-size:15px;line-height:15px;color:#172b4d;font-weight:400;letter-spacing:0.358px;-webkit-text-stroke:0.15px #172b4d;">Software Architect</div>
<svg style="position:absolute;left:275px;top:729px;" width="27" height="27" viewBox="0 0 27 27"><rect width="27" height="27" fill="#c1c1c1"/>
<circle cx="13.5" cy="10.6" r="5.8" fill="#fff"/>
<rect x="10.5" y="14" width="6" height="4" fill="#fff"/>
<path d="M3 27 C3.4 20.2 7.8 16.4 13.5 16.4 C19.2 16.4 23.6 20.2 24 27 Z" fill="#fff"/></svg>
<div class="t" id="t30" style="left:312.44px;top:733.45px;font-size:15px;line-height:15px;color:#172b4d;font-weight:400;letter-spacing:0.480px;-webkit-text-stroke:0.15px #172b4d;">DB Administrator</div>
<svg style="position:absolute;left:505px;top:735px;" width="18" height="18" viewBox="0 0 18 18"><rect width="18" height="18" rx="2" fill="#00a3bf"/>
<ellipse cx="9" cy="10.4" rx="7" ry="3.6" fill="#8e44c4"/>
<path d="M4.6 12.5 L5.2 15.8 L6.6 13.2 Z M13.4 12.5 L12.8 15.8 L11.4 13.2 Z" fill="#5b2a9a"/>
<path d="M4.6 11 C4.6 5 6.5 2.1 9 2.1 C11.5 2.1 13.4 5 13.4 11 Z" fill="#fff"/>
<path d="M6.1 11 C6.1 6.2 7.4 4.1 9 4.1 C10.6 4.1 11.9 6.2 11.9 11 Z" fill="#5ea3e6"/>
<circle cx="9" cy="7.6" r="1.4" fill="#b79ad8"/>
<path d="M2 10.2 Q2 14 9 14 Q16 14 16 10.2 Q13 12 9 12 Q5 12 2 10.2 Z" fill="#8e44c4"/></svg>
<div class="t" id="test4" style="left:527.80px;top:736.25px;font-size:15px;line-height:15px;color:#172b4d;font-weight:400;transform:scaleX(0.8513);transform-origin:0 0;-webkit-text-stroke:0.15px #172b4d;">TEST</div>
<svg style="position:absolute;left:720px;top:735px;" width="18" height="18" viewBox="0 0 18 18"><rect width="18" height="18" rx="2" fill="#2684ff"/>
<path d="M3.6 8.6 L7.3 12 L14.3 5.1" fill="none" stroke="#fff" stroke-width="2.2" stroke-linecap="round" stroke-linejoin="round"/></svg>
<div class="t" id="task4" style="left:743.30px;top:736.25px;font-size:15px;line-height:15px;color:#172b4d;font-weight:400;transform:scaleX(0.8958);transform-origin:0 0;-webkit-text-stroke:0.15px #172b4d;">Task</div>
<svg style="position:absolute;left:935.3px;top:735.2px;" width="16" height="17" viewBox="0 0 16 17"><rect x="1.1" y="2.7" width="13.3" height="12.6" rx="1.6" fill="none" stroke="#172b4d" stroke-width="1.8"/>
<rect x="1.1" y="2.7" width="13.3" height="3" fill="#172b4d"/>
<rect x="3.6" y="0.5" width="1.6" height="2.8" fill="#172b4d"/><rect x="10.4" y="0.5" width="1.6" height="2.8" fill="#172b4d"/>
<rect x="3.9" y="7.8" width="1.7" height="1.6" fill="#172b4d"/><rect x="6.9" y="7.8" width="1.7" height="1.6" fill="#172b4d"/><rect x="9.9" y="7.8" width="1.7" height="1.6" fill="#172b4d"/>
<rect x="3.9" y="11" width="1.7" height="1.6" fill="#172b4d"/><rect x="6.9" y="11" width="1.7" height="1.6" fill="#172b4d"/><rect x="9.9" y="11" width="1.7" height="1.6" fill="#172b4d"/></svg>
<div class="t" id="t33" style="left:956.98px;top:736.25px;font-size:15px;line-height:15px;color:#172b4d;font-weight:400;letter-spacing:0.409px;-webkit-text-stroke:0.15px #172b4d;">2023-09-01</div>
<svg style="position:absolute;left:1074.3px;top:735.2px;" width="16" height="17" viewBox="0 0 16 17"><rect x="1.1" y="2.7" width="13.3" height="12.6" rx="1.6" fill="none" stroke="#172b4d" stroke-width="1.8"/>
<rect x="1.1" y="2.7" width="13.3" height="3" fill="#172b4d"/>
<rect x="3.6" y="0.5" width="1.6" height="2.8" fill="#172b4d"/><rect x="10.4" y="0.5" width="1.6" height="2.8" fill="#172b4d"/>
<rect x="3.9" y="7.8" width="1.7" height="1.6" fill="#172b4d"/><rect x="6.9" y="7.8" width="1.7" height="1.6" fill="#172b4d"/><rect x="9.9" y="7.8" width="1.7" height="1.6" fill="#172b4d"/>
<rect x="3.9" y="11" width="1.7" height="1.6" fill="#172b4d"/><rect x="6.9" y="11" width="1.7" height="1.6" fill="#172b4d"/><rect x="9.9" y="11" width="1.7" height="1.6" fill="#172b4d"/></svg>
<div class="t" id="t34" style="left:1096.24px;top:736.25px;font-size:15px;line-height:15px;color:#172b4d;font-weight:400;letter-spacing:0.587px;-webkit-text-stroke:0.15px #172b4d;">2023-11-30</div>
<div style="position:absolute;left:1257.0px;top:734px;width:27px;height:18px;border-radius:9px;background:#dfe1e6;"></div>
<div class="t" style="left:1257.5px;width:27px;text-align:center;top:736.25px;font-size:15px;line-height:15px;color:#172b4d">0</div>
<div style="position:absolute;left:1384px;top:725px;width:59px;height:34px;background:#ebecf0;border-radius:3px"></div>
<svg style="position:absolute;left:1397px;top:737px;" width="17" height="15" viewBox="0 0 17 15"><rect x="1.5" y="1" width="14" height="11.9" rx="1.8" fill="none" stroke="#344563" stroke-width="2"/>
<path d="M2.6 2.2 L7.6 7.2 Q8.5 8 9.4 7.2 L14.4 2.2" fill="none" stroke="#344563" stroke-width="2"/></svg>
<svg style="position:absolute;left:1423px;top:738px;" width="11" height="8" viewBox="0 0 11 8"><path d="M1.6 1.7 L5.3 5.3 L9 1.7" fill="none" stroke="#344563" stroke-width="2.3"/></svg>
<div style="position:absolute;left:1458px;top:725px;width:43px;height:34px;background:#ebecf0;border-radius:3px"></div>
<svg style="position:absolute;left:1470.8px;top:735.8px;overflow:visible" width="17" height="17" viewBox="0 0 17 17"><g transform="rotate(-45 8.5 8.5)">
<path d="M3.4 5.7 L14.6 5.7 Q16.4 5.7 16.4 7.5 L16.4 9.5 Q16.4 11.3 14.6 11.3 L3.4 11.3 Z" fill="none" stroke="#344563" stroke-width="1.7" stroke-linejoin="round"/>
<path d="M-1.2 8.5 L2.2 5.4 L2.2 11.6 Z" fill="#344563"/>
</g></svg>
<div style="position:absolute;left:1517px;top:725px;width:42px;height:34px;background:#ebecf0;border-radius:3px"></div>
<svg style="position:absolute;left:1530px;top:736px;" width="16" height="17" viewBox="0 0 16 17"><rect x="1" y="2" width="14" height="2.8" rx="1.4" fill="#344563"/>
<rect x="6.2" y="0.9" width="3.8" height="2" rx="0.6" fill="#344563"/>
<path d="M2.6 6.1 L13.4 6.1 L12 15.2 L4.2 15.2 Z" fill="#344563"/></svg>
<div style="position:absolute;left:34px;top:768px;width:1537px;height:50px;background:#fff"></div>
<div style="position:absolute;left:34px;top:818px;width:1537px;height:1px;background:#dfe1e6"></div>
<svg style="position:absolute;left:47.4px;top:789.6px;" width="13" height="10" viewBox="0 0 13 10"><path d="M1.3 1.3 L5 5 L1.3 8.7 M7.3 1.3 L11 5 L7.3 8.7" fill="none" stroke="#172b4d" stroke-width="2.4" stroke-linecap="butt" stroke-linejoin="miter"/></svg>
<svg style="position:absolute;left:92px;top:780px;" width="27" height="27" viewBox="0 0 27 27"><rect width="27" height="27" fill="#c1c1c1"/>
<circle cx="13.5" cy="10.6" r="5.8" fill="#fff"/>
<rect x="10.5" y="14" width="6" height="4" fill="#fff"/>
<path d="M3 27 C3.4 20.2 7.8 16.4 13.5 16.4 C19.2 16.4 23.6 20.2 24 27 Z" fill="#fff"/></svg>
<div class="t" id="t35" style="left:125.00px;top:784.45px;font-size:15px;line-height:15px;color:#172b4d;font-weight:400;letter-spacing:0.067px;-webkit-text-stroke:0.15px #172b4d;">Thomas Edison</div>
<svg style="position:absolute;left:275px;top:780px;" width="27" height="27" viewBox="0 0 27 27"><circle cx="13.5" cy="13.5" r="13.5" fill="#6554c0"/>
<ellipse cx="13.5" cy="14.2" rx="7.6" ry="9" fill="#ffe3db"/>
<ellipse cx="5.8" cy="13" rx="1.6" ry="2" fill="#ffe3db"/><ellipse cx="21.2" cy="13" rx="1.6" ry="2" fill="#ffe3db"/>
<rect x="10" y="17.3" width="7" height="5.6" rx="1" fill="#e0a46c"/>
<ellipse cx="13.5" cy="19.4" rx="1.6" ry="0.9" fill="#253858"/>
<rect x="9.8" y="10.2" width="2.4" height="1" fill="#e0a46c"/><rect x="14.8" y="10.2" width="2.4" height="1" fill="#e0a46c"/>
<circle cx="10.8" cy="13.2" r="0.8" fill="#42526e"/><circle cx="16.2" cy="13.2" r="0.8" fill="#42526e"/></svg>
<div class="t" id="t36" style="left:307.44px;top:784.45px;font-size:15px;line-height:15px;color:#172b4d;font-weight:400;letter-spacing:0.410px;-webkit-text-stroke:0.15px #172b4d;">Software Director</div>
<svg style="position:absolute;left:505px;top:786px;" width="18" height="18" viewBox="0 0 18 18"><rect width="18" height="18" rx="2" fill="#00a3bf"/>
<ellipse cx="9" cy="10.4" rx="7" ry="3.6" fill="#8e44c4"/>
<path d="M4.6 12.5 L5.2 15.8 L6.6 13.2 Z M13.4 12.5 L12.8 15.8 L11.4 13.2 Z" fill="#5b2a9a"/>
<path d="M4.6 11 C4.6 5 6.5 2.1 9 2.1 C11.5 2.1 13.4 5 13.4 11 Z" fill="#fff"/>
<path d="M6.1 11 C6.1 6.2 7.4 4.1 9 4.1 C10.6 4.1 11.9 6.2 11.9 11 Z" fill="#5ea3e6"/>
<circle cx="9" cy="7.6" r="1.4" fill="#b79ad8"/>
<path d="M2 10.2 Q2 14 9 14 Q16 14 16 10.2 Q13 12 9 12 Q5 12 2 10.2 Z" fill="#8e44c4"/></svg>
<div class="t" id="test5" style="left:527.80px;top:787.25px;font-size:15px;line-height:15px;color:#172b4d;font-weight:400;transform:scaleX(0.8513);transform-origin:0 0;-webkit-text-stroke:0.15px #172b4d;">TEST</div>
<svg style="position:absolute;left:720px;top:786px;" width="18" height="18" viewBox="0 0 18 18"><rect width="18" height="18" rx="2" fill="#2684ff"/>
<path d="M3.6 8.6 L7.3 12 L14.3 5.1" fill="none" stroke="#fff" stroke-width="2.2" stroke-linecap="round" stroke-linejoin="round"/></svg>
<div class="t" id="task5" style="left:743.30px;top:787.25px;font-size:15px;line-height:15px;color:#172b4d;font-weight:400;transform:scaleX(0.8958);transform-origin:0 0;-webkit-text-stroke:0.15px #172b4d;">Task</div>
<svg style="position:absolute;left:935.3px;top:786.2px;" width="16" height="17" viewBox="0 0 16 17"><rect x="1.1" y="2.7" width="13.3" height="12.6" rx="1.6" fill="none" stroke="#172b4d" stroke-width="1.8"/>
<rect x="1.1" y="2.7" width="13.3" height="3" fill="#172b4d"/>
<rect x="3.6" y="0.5" width="1.6" height="2.8" fill="#172b4d"/><rect x="10.4" y="0.5" width="1.6" height="2.8" fill="#172b4d"/>
<rect x="3.9" y="7.8" width="1.7" height="1.6" fill="#172b4d"/><rect x="6.9" y="7.8" width="1.7" height="1.6" fill="#172b4d"/><rect x="9.9" y="7.8" width="1.7" height="1.6" fill="#172b4d"/>
<rect x="3.9" y="11" width="1.7" height="1.6" fill="#172b4d"/><rect x="6.9" y="11" width="1.7" height="1.6" fill="#172b4d"/><rect x="9.9" y="11" width="1.7" height="1.6" fill="#172b4d"/></svg>
<div class="t" id="t39" style="left:956.98px;top:787.25px;font-size:15px;line-height:15px;color:#172b4d;font-weight:400;letter-spacing:0.498px;-webkit-text-stroke:0.15px #172b4d;">2023-11-01</div>
<svg style="position:absolute;left:1074.3px;top:786.2px;" width="16" height="17" viewBox="0 0 16 17"><rect x="1.1" y="2.7" width="13.3" height="12.6" rx="1.6" fill="none" stroke="#172b4d" stroke-width="1.8"/>
<rect x="1.1" y="2.7" width="13.3" height="3" fill="#172b4d"/>
<rect x="3.6" y="0.5" width="1.6" height="2.8" fill="#172b4d"/><rect x="10.4" y="0.5" width="1.6" height="2.8" fill="#172b4d"/>
<rect x="3.9" y="7.8" width="1.7" height="1.6" fill="#172b4d"/><rect x="6.9" y="7.8" width="1.7" height="1.6" fill="#172b4d"/><rect x="9.9" y="7.8" width="1.7" height="1.6" fill="#172b4d"/>
<rect x="3.9" y="11" width="1.7" height="1.6" fill="#172b4d"/><rect x="6.9" y="11" width="1.7" height="1.6" fill="#172b4d"/><rect x="9.9" y="11" width="1.7" height="1.6" fill="#172b4d"/></svg>
<div class="t" id="t40" style="left:1096.24px;top:787.25px;font-size:15px;line-height:15px;color:#172b4d;font-weight:400;letter-spacing:0.587px;-webkit-text-stroke:0.15px #172b4d;">2023-11-30</div>
<div style="position:absolute;left:1257.0px;top:783px;width:27px;height:20px;border-radius:10px;background:#dfe1e6;"></div>
<svg style="position:absolute;left:1264.5px;top:787.8px;" width="10" height="13" viewBox="0 0 10 13"><path d="M5.9 0.4 L7.6 0.4 L7.6 11.4 L5.9 11.4 L5.9 2.5 Q4.6 3.5 2.6 4.1 L2.6 2.8 Q4.6 2 5.9 0.4 Z" fill="#0052cc"/></svg>
<div style="position:absolute;left:1384px;top:776px;width:59px;height:34px;background:#ebecf0;border-radius:3px"></div>
<svg style="position:absolute;left:1397px;top:788px;" width="17" height="15" viewBox="0 0 17 15"><rect x="1.5" y="1" width="14" height="11.9" rx="1.8" fill="none" stroke="#344563" stroke-width="2"/>
<path d="M2.6 2.2 L7.6 7.2 Q8.5 8 9.4 7.2 L14.4 2.2" fill="none" stroke="#344563" stroke-width="2"/></svg>
<svg style="position:absolute;left:1423px;top:789px;" width="11" height="8" viewBox="0 0 11 8"><path d="M1.6 1.7 L5.3 5.3 L9 1.7" fill="none" stroke="#344563" stroke-width="2.3"/></svg>
<div style="position:absolute;left:1458px;top:776px;width:43px;height:34px;background:#ebecf0;border-radius:3px"></div>
<svg style="position:absolute;left:1470.8px;top:786.8px;overflow:visible" width="17" height="17" viewBox="0 0 17 17"><g transform="rotate(-45 8.5 8.5)">
<path d="M3.4 5.7 L14.6 5.7 Q16.4 5.7 16.4 7.5 L16.4 9.5 Q16.4 11.3 14.6 11.3 L3.4 11.3 Z" fill="none" stroke="#344563" stroke-width="1.7" stroke-linejoin="round"/>
<path d="M-1.2 8.5 L2.2 5.4 L2.2 11.6 Z" fill="#344563"/>
</g></svg>
<div style="position:absolute;left:1517px;top:776px;width:42px;height:34px;background:#ebecf0;border-radius:3px"></div>
<svg style="position:absolute;left:1530px;top:787px;" width="16" height="17" viewBox="0 0 16 17"><rect x="1" y="2" width="14" height="2.8" rx="1.4" fill="#344563"/>
<rect x="6.2" y="0.9" width="3.8" height="2" rx="0.6" fill="#344563"/>
<path d="M2.6 6.1 L13.4 6.1 L12 15.2 L4.2 15.2 Z" fill="#344563"/></svg>
<div style="position:absolute;left:34px;top:819px;width:1537px;height:50px;background:#fafbfc"></div>
<div style="position:absolute;left:34px;top:869px;width:1537px;height:2px;background:#dfe1e6"></div>
<svg style="position:absolute;left:47.4px;top:840.6px;" width="13" height="10" viewBox="0 0 13 10"><path d="M1.3 1.3 L5 5 L1.3 8.7 M7.3 1.3 L11 5 L7.3 8.7" fill="none" stroke="#172b4d" stroke-width="2.4" stroke-linecap="butt" stroke-linejoin="miter"/></svg>
<svg style="position:absolute;left:92px;top:831px;" width="27" height="27" viewBox="0 0 27 27"><circle cx="13.5" cy="13.5" r="13.5" fill="#6554c0"/>
<ellipse cx="13.5" cy="14.2" rx="7.6" ry="9" fill="#ffe3db"/>
<ellipse cx="5.8" cy="13" rx="1.6" ry="2" fill="#ffe3db"/><ellipse cx="21.2" cy="13" rx="1.6" ry="2" fill="#ffe3db"/>
<rect x="10" y="17.3" width="7" height="5.6" rx="1" fill="#e0a46c"/>
<ellipse cx="13.5" cy="19.4" rx="1.6" ry="0.9" fill="#253858"/>
<rect x="9.8" y="10.2" width="2.4" height="1" fill="#e0a46c"/><rect x="14.8" y="10.2" width="2.4" height="1" fill="#e0a46c"/>
<circle cx="10.8" cy="13.2" r="0.8" fill="#42526e"/><circle cx="16.2" cy="13.2" r="0.8" fill="#42526e"/></svg>
<div class="t" id="t41" style="left:124.20px;top:835.45px;font-size:15px;line-height:15px;color:#172b4d;font-weight:400;letter-spacing:0.400px;-webkit-text-stroke:0.15px #172b4d;">Software Director</div>
<svg style="position:absolute;left:275px;top:831px;" width="27" height="27" viewBox="0 0 27 27"><rect width="27" height="27" fill="#c1c1c1"/>
<circle cx="13.5" cy="10.6" r="5.8" fill="#fff"/>
<rect x="10.5" y="14" width="6" height="4" fill="#fff"/>
<path d="M3 27 C3.4 20.2 7.8 16.4 13.5 16.4 C19.2 16.4 23.6 20.2 24 27 Z" fill="#fff"/></svg>
<div class="t" id="t42" style="left:308.24px;top:835.45px;font-size:15px;line-height:15px;color:#172b4d;font-weight:400;letter-spacing:0.448px;-webkit-text-stroke:0.15px #172b4d;">Alan Turing</div>
<div style="position:absolute;left:1257.0px;top:834px;width:27px;height:20px;border-radius:10px;background:#dfe1e6;"></div>
<svg style="position:absolute;left:1264.5px;top:838.8px;" width="10" height="13" viewBox="0 0 10 13"><path d="M5.9 0.4 L7.6 0.4 L7.6 11.4 L5.9 11.4 L5.9 2.5 Q4.6 3.5 2.6 4.1 L2.6 2.8 Q4.6 2 5.9 0.4 Z" fill="#0052cc"/></svg>
<div style="position:absolute;left:1384px;top:827px;width:59px;height:34px;background:#ebecf0;border-radius:3px"></div>
<svg style="position:absolute;left:1397px;top:839px;" width="17" height="15" viewBox="0 0 17 15"><rect x="1.5" y="1" width="14" height="11.9" rx="1.8" fill="none" stroke="#344563" stroke-width="2"/>
<path d="M2.6 2.2 L7.6 7.2 Q8.5 8 9.4 7.2 L14.4 2.2" fill="none" stroke="#344563" stroke-width="2"/></svg>
<svg style="position:absolute;left:1423px;top:840px;" width="11" height="8" viewBox="0 0 11 8"><path d="M1.6 1.7 L5.3 5.3 L9 1.7" fill="none" stroke="#344563" stroke-width="2.3"/></svg>
<div style="position:absolute;left:1458px;top:827px;width:43px;height:34px;background:#ebecf0;border-radius:3px"></div>
<svg style="position:absolute;left:1470.8px;top:837.8px;overflow:visible" width="17" height="17" viewBox="0 0 17 17"><g transform="rotate(-45 8.5 8.5)">
<path d="M3.4 5.7 L14.6 5.7 Q16.4 5.7 16.4 7.5 L16.4 9.5 Q16.4 11.3 14.6 11.3 L3.4 11.3 Z" fill="none" stroke="#344563" stroke-width="1.7" stroke-linejoin="round"/>
<path d="M-1.2 8.5 L2.2 5.4 L2.2 11.6 Z" fill="#344563"/>
</g></svg>
<div style="position:absolute;left:1517px;top:827px;width:42px;height:34px;background:#ebecf0;border-radius:3px"></div>
<svg style="position:absolute;left:1530px;top:838px;" width="16" height="17" viewBox="0 0 16 17"><rect x="1" y="2" width="14" height="2.8" rx="1.4" fill="#344563"/>
<rect x="6.2" y="0.9" width="3.8" height="2" rx="0.6" fill="#344563"/>
<path d="M2.6 6.1 L13.4 6.1 L12 15.2 L4.2 15.2 Z" fill="#344563"/></svg>
<div style="position:absolute;left:34px;top:537px;width:1537px;height:179px;background:#fff"></div>
<div style="position:absolute;left:34px;top:716px;width:1537px;height:1px;background:#dfe1e6"></div>
<div style="position:absolute;left:102px;top:586px;width:271px;height:41px;background:#fafbfc"></div>
<div style="position:absolute;left:102px;top:667px;width:271px;height:41px;background:#fafbfc"></div>
<div class="t" id="t43" style="left:112.94px;top:559.55px;font-size:15px;line-height:15px;color:#172b4d;font-weight:400;letter-spacing:-0.187px;-webkit-text-stroke:0.15px #172b4d;">Issues:</div>
<div class="t" id="t44" style="left:234.78px;top:559.55px;font-size:15px;line-height:15px;color:#172b4d;font-weight:400;letter-spacing:-0.142px;-webkit-text-stroke:0.15px #172b4d;">All issues</div>
<div class="t" id="t45" style="left:112.94px;top:600.25px;font-size:15px;line-height:15px;color:#172b4d;font-weight:400;letter-spacing:0.074px;-webkit-text-stroke:0.15px #172b4d;">Source Status:</div>
<div class="t" id="t46" style="left:233.98px;top:600.25px;font-size:15px;line-height:15px;color:#172b4d;font-weight:400;letter-spacing:0.274px;-webkit-text-stroke:0.15px #172b4d;">Open (1)</div>
<div class="t" id="t47" style="left:113.74px;top:641.05px;font-size:15px;line-height:15px;color:#172b4d;font-weight:400;letter-spacing:0.176px;-webkit-text-stroke:0.15px #172b4d;">Transition:</div>
<div class="t" id="t48" style="left:233.98px;top:641.05px;font-size:15px;line-height:15px;color:#172b4d;font-weight:400;letter-spacing:0.089px;-webkit-text-stroke:0.15px #172b4d;">Start Progress (11)</div>
<div class="t" id="t49" style="left:113.74px;top:681.45px;font-size:15px;line-height:15px;color:#172b4d;font-weight:400;letter-spacing:0.440px;-webkit-text-stroke:0.15px #172b4d;">Approval:</div>
<div class="t" id="t50" style="left:233.98px;top:681.45px;font-size:15px;line-height:15px;color:#172b4d;font-weight:400;letter-spacing:0.140px;-webkit-text-stroke:0.15px #172b4d;">Software Team (9)</div>
<div style="position:absolute;left:1241px;top:531px;width:201px;height:75px;background:#fff;border-radius:3px;box-shadow:0 4px 8px -2px rgba(9,30,66,0.25),0 0 1px rgba(9,30,66,0.31);"></div>
<div class="t" id="nd" style="left:1252.58px;top:544.85px;font-size:15px;line-height:15px;color:#42526e;font-weight:400;letter-spacing:0.590px;-webkit-text-stroke:0.15px #42526e;">Notify Delegation</div>
<div class="t" id="t52" style="left:1251.94px;top:579.25px;font-size:15px;line-height:15px;color:#42526e;font-weight:400;letter-spacing:0.508px;-webkit-text-stroke:0.15px #42526e;">Notify Pending Approvals</div>
<svg style="position:absolute;left:1248px;top:533px;mix-blend-mode:multiply" width="140" height="34" viewBox="0 0 140 34"><path d="M1.8 4 L21.3 3.3 L35 2 L56.5 2 L68 4.8 L73 6.7 L90.6 7.2 L97.5 8.7 L127.7 8.2 L136 7.7 L136 29.7 L89.7 29.2 L83.8 28.2 L62.3 26.7 L46.7 23.3 L33 23.8 L1.8 24.8 Z" fill="#ffff00"/></svg>
<div style="position:absolute;left:1460px;top:875px;width:42px;height:3px;border:1px solid #c1c7d0;border-bottom:none;border-radius:4px 4px 0 0;background:#fff;box-sizing:border-box"></div>
</body></html>
